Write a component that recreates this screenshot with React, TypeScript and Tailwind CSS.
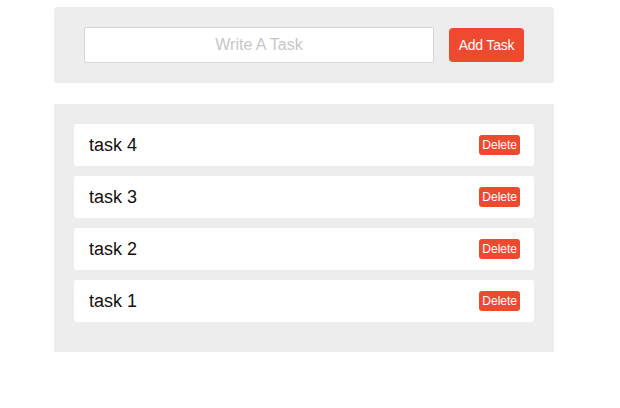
import React, { useState } from 'react';

export default function App() {
  const [tasks, setTasks] = useState<string[]>(['task 4', 'task 3', 'task 2', 'task 1']);
  const [text, setText] = useState('');

  const addTask = () => {
    if (!text.trim()) return;
    setTasks((prev) => [text, ...prev]);
    setText('');
  };

  const removeTask = (i: number) => {
    setTasks((prev) => prev.filter((_, idx) => idx !== i));
  };

  return (
    <div className="w-[620px] pt-[7px] font-['Liberation_Sans',Arial,sans-serif]">
      {/* input panel */}
      <div className="ml-[54px] w-[500px] h-[76px] bg-[#ededed] rounded-[3px] flex items-center justify-center gap-[15px]">
        <input
          value={text}
          onChange={(e) => setText(e.target.value)}
          placeholder="Write A Task"
          className="w-[350px] h-[36px] bg-white border border-[#d6d6d6] rounded-[2px] text-center text-[16px] text-[#222] placeholder-[#c6c6c6] outline-none"
        />
        <button
          onClick={addTask}
          className="w-[75px] h-[34px] bg-[#ef4a2f] text-white text-[14px] tracking-[-0.2px] rounded-[4px]"
        >
          Add Task
        </button>
      </div>

      {/* task list */}
      <div className="ml-[54px] mt-[21px] w-[500px] bg-[#ededed] pt-[20px] px-[20px] pb-[20px] flex flex-col">
        {tasks.map((t, i) => (
          <div
            key={t + i}
            className="h-[42px] mb-[10px] bg-white rounded-[3px] flex items-center justify-between pl-[15px] pr-[14px]"
          >
            <span className="text-[18px] text-[#111]">{t}</span>
            <button
              onClick={() => removeTask(i)}
              className="h-[20px] px-[3px] bg-[#ef4a2f] text-white text-[12px] font-medium rounded-[3px] leading-none"
            >
              Delete
            </button>
          </div>
        ))}
      </div>
    </div>
  );
}
